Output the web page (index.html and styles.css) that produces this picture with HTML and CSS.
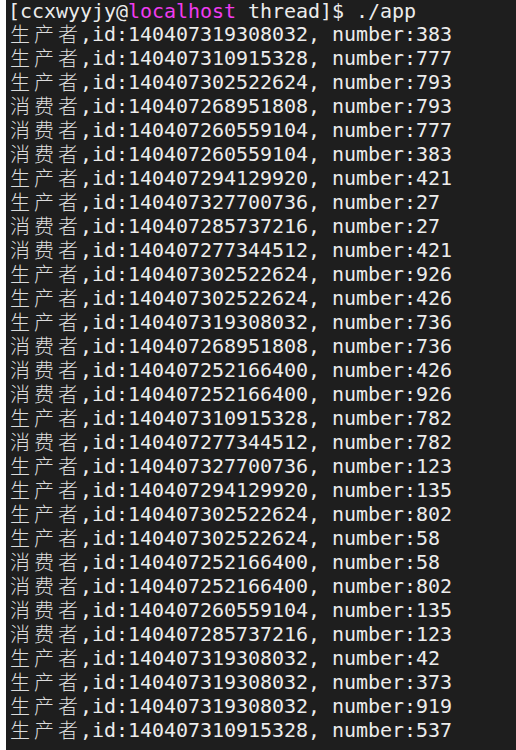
FILE: index.html
```html
<!DOCTYPE html>
<html>
<head>
<meta charset="utf-8">
<link rel="stylesheet" href="styles.css">
</head>
<body>
<div class="term">
<div class="ln first">[ccxwyyjy@<span class="host">localhost</span> thread]$ ./app</div>
<div class="ln"><span class="c">生</span><span class="c">产</span><span class="c">者</span>,id:140407319308032, number:383</div>
<div class="ln"><span class="c">生</span><span class="c">产</span><span class="c">者</span>,id:140407310915328, number:777</div>
<div class="ln"><span class="c">生</span><span class="c">产</span><span class="c">者</span>,id:140407302522624, number:793</div>
<div class="ln"><span class="c">消</span><span class="c">费</span><span class="c">者</span>,id:140407268951808, number:793</div>
<div class="ln"><span class="c">消</span><span class="c">费</span><span class="c">者</span>,id:140407260559104, number:777</div>
<div class="ln"><span class="c">消</span><span class="c">费</span><span class="c">者</span>,id:140407260559104, number:383</div>
<div class="ln"><span class="c">生</span><span class="c">产</span><span class="c">者</span>,id:140407294129920, number:421</div>
<div class="ln"><span class="c">生</span><span class="c">产</span><span class="c">者</span>,id:140407327700736, number:27</div>
<div class="ln"><span class="c">消</span><span class="c">费</span><span class="c">者</span>,id:140407285737216, number:27</div>
<div class="ln"><span class="c">消</span><span class="c">费</span><span class="c">者</span>,id:140407277344512, number:421</div>
<div class="ln"><span class="c">生</span><span class="c">产</span><span class="c">者</span>,id:140407302522624, number:926</div>
<div class="ln"><span class="c">生</span><span class="c">产</span><span class="c">者</span>,id:140407302522624, number:426</div>
<div class="ln"><span class="c">生</span><span class="c">产</span><span class="c">者</span>,id:140407319308032, number:736</div>
<div class="ln"><span class="c">消</span><span class="c">费</span><span class="c">者</span>,id:140407268951808, number:736</div>
<div class="ln"><span class="c">消</span><span class="c">费</span><span class="c">者</span>,id:140407252166400, number:426</div>
<div class="ln"><span class="c">消</span><span class="c">费</span><span class="c">者</span>,id:140407252166400, number:926</div>
<div class="ln"><span class="c">生</span><span class="c">产</span><span class="c">者</span>,id:140407310915328, number:782</div>
<div class="ln"><span class="c">消</span><span class="c">费</span><span class="c">者</span>,id:140407277344512, number:782</div>
<div class="ln"><span class="c">生</span><span class="c">产</span><span class="c">者</span>,id:140407327700736, number:123</div>
<div class="ln"><span class="c">生</span><span class="c">产</span><span class="c">者</span>,id:140407294129920, number:135</div>
<div class="ln"><span class="c">生</span><span class="c">产</span><span class="c">者</span>,id:140407302522624, number:802</div>
<div class="ln"><span class="c">生</span><span class="c">产</span><span class="c">者</span>,id:140407302522624, number:58</div>
<div class="ln"><span class="c">消</span><span class="c">费</span><span class="c">者</span>,id:140407252166400, number:58</div>
<div class="ln"><span class="c">消</span><span class="c">费</span><span class="c">者</span>,id:140407252166400, number:802</div>
<div class="ln"><span class="c">消</span><span class="c">费</span><span class="c">者</span>,id:140407260559104, number:135</div>
<div class="ln"><span class="c">消</span><span class="c">费</span><span class="c">者</span>,id:140407285737216, number:123</div>
<div class="ln"><span class="c">生</span><span class="c">产</span><span class="c">者</span>,id:140407319308032, number:42</div>
<div class="ln"><span class="c">生</span><span class="c">产</span><span class="c">者</span>,id:140407319308032, number:373</div>
<div class="ln"><span class="c">生</span><span class="c">产</span><span class="c">者</span>,id:140407319308032, number:919</div>
<div class="ln"><span class="c">生</span><span class="c">产</span><span class="c">者</span>,id:140407310915328, number:537</div>
</div>
</body>
</html>
```

FILE: styles.css
```css
html, body {
  margin: 0;
  padding: 0;
  background: #ffffff;
}
.term {
  margin-left: 6px;
  height: 750px;
  background: #1e1e1e;
  color: #ececec;
  font-family: "DejaVu Sans Mono", "Liberation Mono", monospace;
  font-size: 20px;
  padding-left: 2px;
  box-sizing: border-box;
  overflow: hidden;
}
.ln {
  height: 24px;
  line-height: 24px;
  white-space: pre;
  letter-spacing: -0.04px;
}
.ln.first {
  height: 22px;
  line-height: 22px;
}
.host {
  color: #f03cf0;
}
.c {
  display: inline-block;
  vertical-align: top;
  width: 24px;
  height: 24px;
  line-height: 24px;
  text-align: center;
  letter-spacing: 0;
  font-family: "Noto Sans CJK SC", sans-serif;
  font-size: 20px;
  font-weight: 300;
  color: #dcdcdc;
}
```
